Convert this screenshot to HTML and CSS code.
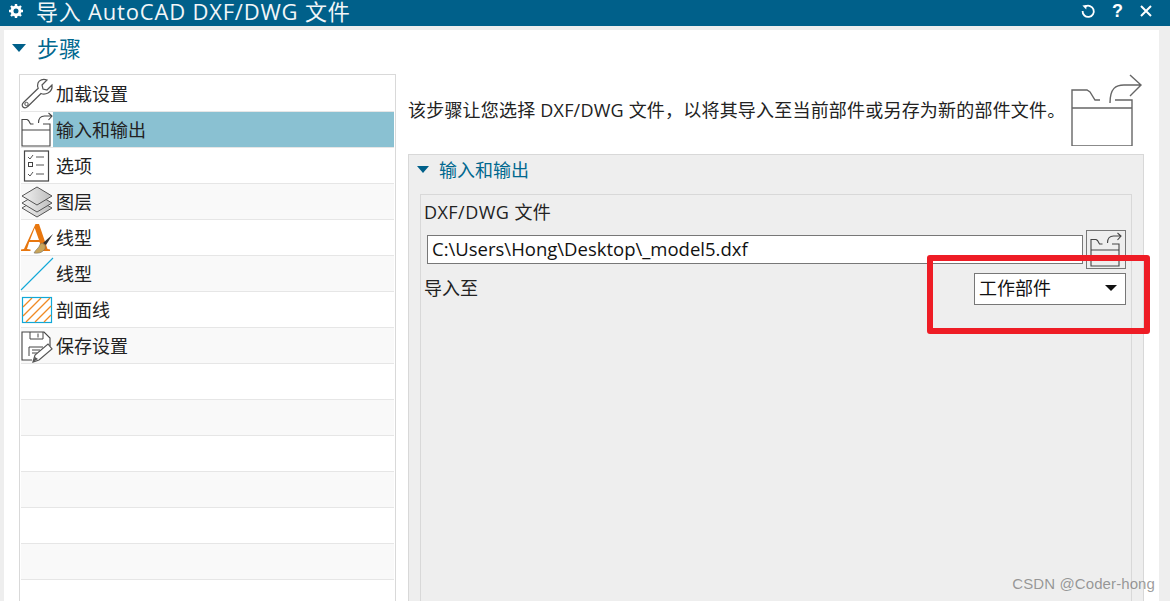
FILE: index.html
```html
<!DOCTYPE html>
<html lang="zh-CN">
<head>
<meta charset="utf-8">
<title>导入 AutoCAD DXF/DWG 文件</title>
<link rel="stylesheet" href="styles.css">
</head>
<body>
<header class="titlebar">
  <svg class="gear" viewBox="0 0 16 16" width="16" height="16"><circle cx="8" cy="8" r="4" fill="none" stroke="#fff" stroke-width="3"/><path d="M8 1v3M8 12v3M1 8h3M12 8h3M3 3l2 2M11 11l2 2M13 3l-2 2M5 11l-2 2" stroke="#fff" stroke-width="2.4"/></svg>
  <h1 class="title">导入 AutoCAD DXF/DWG 文件</h1>
  <div class="winbtns">
    <svg viewBox="0 0 16 16" width="16" height="16"><path d="M5.2 3.6A5.6 5.6 0 1 1 2.600 8" fill="none" stroke="#fff" stroke-width="1.800"/><path d="M2.400 2.600l4.400-.6-.6 4.400z" fill="#fff"/></svg>
    <span class="help">?</span>
    <svg viewBox="0 0 14 14" width="14" height="14"><path d="M2 2l10 10M12 2L2 12" stroke="#fff" stroke-width="2"/></svg>
  </div>
</header>
<main class="main">
  <div class="steps-head"><span class="tri"></span><span>步骤</span></div>
  <div class="content">
    <ul class="steps">
      <li class="step">
        <svg class="ico" viewBox="0 0 32 32"><path d="M31 7l-5 5-4-1-1-4 5-5c-4-1.500-8 0-9 3-.8 2.400-.5 4 .2 5.300L2.500 24.500c-1.800 1.800-1.500 3.500-.5 4.500s3 1.300 4.500-.3L20 15.500c2 .8 4.500.8 7-.5 3-1.600 4.500-4.500 4-8z" fill="#fff" stroke="#555" stroke-width="1.200"/><circle cx="5.500" cy="26" r="1.700" fill="none" stroke="#555"/></svg>
        <span class="step-label">加载设置</span>
      </li>
      <li class="step selected">
        <svg class="ico" viewBox="0 0 32 32"><path d="M12.500 10H9.500L7.500 6.500 6 5.500H1V32h28V10H22M1 16h28M17.500 9c0-5 2.500-7 6-7H31M27.500 -1l3.500 3-3.500 4" fill="none" stroke="#444" stroke-width="1.100"/></svg>
        <span class="step-label">输入和输出</span>
      </li>
      <li class="step">
        <svg class="ico" viewBox="0 0 32 32"><rect x="3.500" y="1" width="24" height="30" fill="#fff" stroke="#444" stroke-width="1.200"/><path d="M7 7l2 2 3-4M15 7h8M15 15h8M7 24l2 2 3-4M15 24h8" fill="none" stroke="#555"/><rect x="7.500" y="12.500" width="4" height="4" fill="none" stroke="#444"/></svg>
        <span class="step-label">选项</span>
      </li>
      <li class="step">
        <svg class="ico" viewBox="0 0 32 32"><defs><linearGradient id="g" x1="0" x2="1"><stop offset="0" stop-color="#f2f2f2"/><stop offset="1" stop-color="#bdbdbd"/></linearGradient></defs><path d="M16 13L1 22l15 9 15-9z" fill="url(#g)" stroke="#555"/><path d="M16 8L1 17l15 9 15-9z" fill="url(#g)" stroke="#555"/><path d="M16 1L1 10l15 9 15-9z" fill="url(#g)" stroke="#555"/></svg>
        <span class="step-label">图层</span>
      </li>
      <li class="step">
        <svg class="ico" viewBox="0 0 32 32"><path d="M0 29h9.500v-1.500L6 27l2.200-7h10.300l2.300 7-3 .5V29H29v-1.500l-2.500-.5L18 2h-3.500L3 27l-3 .6zM9 18l4.700-12L18 18z" fill="#e8770f"/><path d="M22 21L32 12l-7 11z" fill="#333"/><path d="M21 21c-3 1-2 3-4 5s-3 3-4 5c4 .5 7 0 9-2s3-3 2-6z" fill="#c9a55a" stroke="#666" stroke-width=".5"/></svg>
        <span class="step-label">线型</span>
      </li>
      <li class="step">
        <svg class="ico" viewBox="0 0 32 32"><path d="M0 32L32 0" stroke="#10a8d8" stroke-width="1.100"/></svg>
        <span class="step-label">线型</span>
      </li>
      <li class="step">
        <svg class="ico" viewBox="0 0 32 32"><rect x="1.500" y="3.500" width="29" height="25" fill="#fff" stroke="#10a8d8" stroke-width="1.200"/><path d="M2 13L11 4M2 22L20 4M5 28L29 4M14 28l16-16M23 28l7-7" stroke="#f08a24" stroke-width="1.300"/></svg>
        <span class="step-label">剖面线</span>
      </li>
      <li class="step">
        <svg class="ico" viewBox="0 0 32 32"><path d="M29 16V8l-6-6H1v28h10" fill="#fff" stroke="#444" stroke-width="1.100"/><path d="M9 2v7h13V2M17 3.500v4M8 26v-9h14M11 20h8M11 23h5" fill="none" stroke="#444"/><path d="M12 32l2-7 13-11 4 5-13 11z" fill="#fff" stroke="#555" stroke-width="1.200"/><path d="M12 32l2-5 3 2z" fill="#555"/></svg>
        <span class="step-label">保存设置</span>
      </li>
      <li class="step"></li><li class="step"></li><li class="step"></li><li class="step"></li>
      <li class="step"></li><li class="step"></li><li class="step"></li>
    </ul>
    <section class="detail">
      <div class="intro">
        <p class="desc">该步骤让您选择 DXF/DWG 文件，以将其导入至当前部件或另存为新的部件文件。</p>
        <svg class="big-ico" viewBox="0 0 72 72"><path d="M29 26h-5l-5-8-3-2H1v56h60V26H44M1 34h60M39 29c0-15 6-18 14-18h17M59 1l11 10-11 11" fill="none" stroke="#666" stroke-width="1.400"/></svg>
      </div>
      <div class="group">
        <div class="group-head"><span class="tri small"></span><span>输入和输出</span></div>
        <div class="inner">
          <div class="field-label">DXF/DWG 文件</div>
          <div class="file-row">
            <div class="text-input">C:\Users\Hong\Desktop\_model5.dxf</div>
            <button class="browse" type="button"><svg viewBox="0 0 32 32" width="32" height="32"><path d="M12.500 10H9.500L7.500 6.500 6 5.500H1V32h28V10H22M1 16h28M17.500 9c0-5 2.500-7 6-7H31M27.500 -1l3.500 3-3.500 4" fill="none" stroke="#444" stroke-width="1.100"/></svg></button>
          </div>
          <div class="target-row">
            <span>导入至</span>
            <div class="select"><span>工作部件</span><span class="caret"></span></div>
          </div>
        </div>
      </div>
    </section>
  </div>
</main>
<div class="highlight"></div>
<div class="watermark">CSDN @Coder-hong</div>
</body>
</html>
```
FILE: styles.css
```css
* { box-sizing: border-box; }
html, body { margin: 0; height: 601px; overflow: hidden; }
body {
  background: #eeeeee;
  color: #222;
  font-family: "Open Sans", "Noto Sans CJK SC", sans-serif;
  font-size: 18px;
  position: relative;
}
.titlebar {
  height: 26px;
  background: #00608a;
  color: #fff;
  display: flex;
  align-items: center;
  padding: 0 17px 4px 8px;
}
.gear { flex: none; }
.title {
  margin: 0 0 0 12px;
  font-size: 22px;
  font-weight: 400;
  line-height: 20px;
  letter-spacing: .8px;
  color: #f2f6f8;
}
.winbtns { margin-left: auto; display: flex; align-items: center; gap: 16px; }
.help { font-weight: 700; font-size: 18px; line-height: 20px; font-family: "Liberation Sans", sans-serif; }
.main {
  margin: 4px 11px 0 4px;
  height: 571px;
  background: #fff;
  overflow: hidden;
}
.steps-head {
  height: 44px;
  padding-left: 8px;
  display: flex;
  align-items: center;
  gap: 11px;
  font-size: 22px;
  color: #00688f;
  line-height: 36px;
  padding-bottom: 9px;
}
.tri {
  width: 0; height: 0;
  border-left: 7px solid transparent;
  border-right: 7px solid transparent;
  border-top: 8px solid #00608a;
}
.tri.small { border-left-width: 6px; border-right-width: 6px; border-top-width: 7px; }
.content { display: flex; padding-left: 15px; }
.steps {
  list-style: none;
  margin: 0;
  padding: 1px 1px 0;
  width: 377px;
  border: 1px solid #d9d9d9;
  border-bottom: 0;
  flex: none;
  height: 527px;
}
.step {
  height: 36px;
  display: flex;
  align-items: center;
  border-bottom: 1px solid #e6e6e6;
  gap: 3px;
  line-height: 24px;
}
.step:nth-child(even) { background: #f9f9f9; }
.ico { width: 32px; height: 32px; flex: none; overflow: visible; }
.step-label { flex: 1; height: 35px; line-height: 36px; padding-left: 3px; margin-left: -3px; color: #222; }
.step.selected { background: #fff; }
.step.selected .step-label { background: #8ac1d2; }
.detail { margin-left: 12px; width: 736px; }
.intro { height: 80px; display: flex; }
.desc { margin: 24px 0 0; width: 664px; line-height: 24px; white-space: nowrap; letter-spacing: .2px; }
.big-ico { width: 72px; height: 72px; margin-left: -1px; flex: none; }
.group {
  background: #eeeeee;
  border: 1px solid #d8d8d8;
  height: 460px;
  padding: 0 11px;
}
.group-head {
  height: 39px;
  display: flex;
  align-items: center;
  gap: 10px;
  margin-left: -3px;
  padding-bottom: 11px;
  color: #00688f;
}
.inner { border: 1px solid #d8d8d8; height: 420px; padding: 5px 5px 0 3px; }
.field-label { line-height: 24px; height: 30px; letter-spacing: .45px; }
.file-row { display: flex; align-items: flex-start; gap: 3px; height: 43px; padding-left: 3px; }
.text-input {
  flex: 1;
  height: 29px;
  margin-top: 5px;
  background: #fff;
  border: 1px solid #777;
  padding-left: 4px;
  line-height: 25px;
  color: #111;
  font-size: 18.5px;
}
.browse {
  width: 40px;
  height: 39px;
  padding: 0 0 0 3px;
  background: #eeeeee;
  border: 1px solid #777;
  display: flex;
  align-items: center;
}
.browse svg { overflow: visible; }
.target-row { display: flex; justify-content: space-between; align-items: flex-start; line-height: 30px; }
.select {
  width: 152px;
  height: 32px;
  background: #fff;
  border: 1px solid #777;
  display: flex;
  align-items: center;
  justify-content: space-between;
  padding: 0 8px 2px 4px;
  line-height: 28px;
  color: #111;
}
.caret {
  width: 0; height: 0;
  border-left: 6px solid transparent;
  border-right: 6px solid transparent;
  border-top: 6px solid #111;
}
.highlight {
  position: absolute;
  left: 927px; top: 255px;
  width: 223px; height: 79px;
  border: 6px solid #ee1c25;
  border-radius: 3px;
}
.watermark {
  position: absolute;
  right: 15px; top: 574px;
  font-family: "Liberation Sans", sans-serif;
  font-size: 15px;
  line-height: 20px;
  color: rgba(90, 90, 90, .6);
  letter-spacing: .1px;
}
```
